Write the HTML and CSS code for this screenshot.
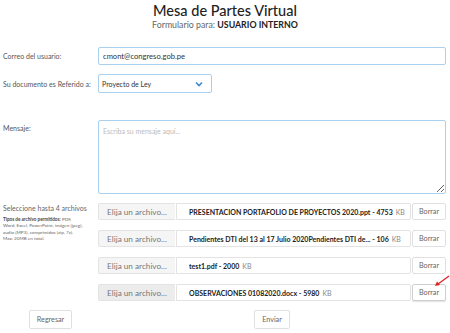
FILE: index.html
```html
<!DOCTYPE html>
<html lang="es">
 <head>
   <title>Mesa de Partes Virtual</title>
   <meta charset="utf-8">
   <link rel="stylesheet" href="styles.css">
 </head>
 <body>
  <div id="main">
    <div id="header">
      <h1>Mesa de Partes Virtual</h1>
      <p>Formulario para: <b>USUARIO INTERNO</b></p>
    </div>

    <form id="form">
      <label class="lbl mid">Correo del usuario:</label>
      <input class="field" type="text" value="cmont@congreso.gob.pe">

      <label class="lbl mid">Su documento es Referido a:</label>
      <div class="select-wrap">
        <select class="field select">
          <option>Proyecto de Ley</option>
        </select>
        <svg class="chevron" width="8" height="6" viewBox="0 0 8 6"><path d="M1 1.5 L4 4.5 L7 1.5" fill="none" stroke="#3b8ad6" stroke-width="1.6"/></svg>
      </div>

      <label class="lbl top msg-lbl">Mensaje:</label>
      <textarea class="field msg" placeholder="Escriba su mensaje aquí..."></textarea>

      <div class="files-info">
        <div class="files-title">Seleccione hasta 4 archivos</div>
        <div class="files-help"><b>Tipos de archivo permitidos:</b> PDF, Word, Excel, PowerPoint, imágen (jpeg), audio (MP3), comprimidos (zip, 7z). Max: 20MB en total.</div>
      </div>
      <div class="files">
        <div class="file-row">
          <span class="pick">Elija un archivo...</span>
          <span class="fname"><b>PRESENTACION PORTAFOLIO DE PROYECTOS 2020.ppt - 4753</b> KB</span>
          <button type="button" class="btn del">Borrar</button>
        </div>
        <div class="file-row">
          <span class="pick">Elija un archivo...</span>
          <span class="fname"><b>Pendientes DTI del 13 al 17 Julio 2020Pendientes DTI de... - 106</b> KB</span>
          <button type="button" class="btn del">Borrar</button>
        </div>
        <div class="file-row">
          <span class="pick">Elija un archivo...</span>
          <span class="fname"><b>test1.pdf - 2000</b> KB</span>
          <button type="button" class="btn del">Borrar</button>
        </div>
        <div class="file-row last">
          <span class="pick">Elija un archivo...</span>
          <span class="fname"><b>OBSERVACIONES 01082020.docx - 5980</b> KB</span>
          <button type="button" class="btn del">Borrar</button>
          <svg class="arrow" width="16" height="12" viewBox="0 0 16 12"><path d="M15 1 L4 9" stroke="#e02020" stroke-width="1.2"/><path d="M1 11 L3 6.5 L6 10 Z" fill="#e02020"/></svg>
        </div>
      </div>

      <div class="actions"><button type="button" class="btn">Regresar</button></div>
      <div class="actions"><button type="button" class="btn">Enviar</button></div>
    </form>
  </div>
 </body>
</html>
```
FILE: styles.css
```css
html, body {
  margin: 0;
  padding: 0;
  background: #fff;
}

#main {
  width: 450px;
  font-family: Lato, "Open Sans", sans-serif;
  color: #444;
}

#header {
  text-align: center;
  padding-top: 3px;
}

#header h1 {
  margin: 0;
  font-size: 14.5px;
  font-weight: 500;
  line-height: 16px;
  color: #222;
}

#header p {
  margin: 0;
  font-size: 8.8px;
  line-height: 11px;
  color: #666;
}

#header b {
  color: #222;
}

#form {
  display: grid;
  grid-template-columns: 95px minmax(0, 1fr);
  row-gap: 9px;
  padding: 17px 4px 0 3px;
}

.lbl {
  font-size: 7px;
  color: #555;
  white-space: nowrap;
}

.lbl.mid {
  align-self: center;
}

.lbl.top {
  padding-top: 4px;
}

.field {
  box-sizing: border-box;
  font-family: inherit;
  color: #333;
  border: 1px solid #a9d0ef;
  border-radius: 2px;
  background: #fff;
  outline: none;
}

input.field {
  height: 18px;
  padding: 0 4px;
  font-size: 7.6px;
}

.select-wrap {
  position: relative;
  width: 114px;
  height: 19px;
}

.select {
  display: block;
  width: 114px;
  height: 19px;
  padding: 0 3px;
  font-size: 7px;
  appearance: none;
  -webkit-appearance: none;
}

.chevron {
  position: absolute;
  right: 9px;
  top: 7px;
}

.msg-lbl {
  margin-top: 18px;
}

.msg {
  display: block;
  margin-top: 18px;
  height: 74px;
  padding: 6px 4px;
  font-size: 7px;
  resize: vertical;
}

.msg::placeholder {
  color: #bbb;
}

.files-info {
  margin-top: 1px;
}

.files-title {
  font-size: 7px;
  color: #666;
  line-height: 9px;
}

.files-help {
  width: 80px;
  font-size: 4.6px;
  line-height: 6.3px;
  color: #666;
  margin-top: 3px;
}

.files-help b {
  color: #444;
}

.files {
  display: flex;
  flex-direction: column;
  gap: 10px;
}

.file-row {
  position: relative;
  display: flex;
  height: 17px;
  gap: 1px;
}

.pick {
  box-sizing: border-box;
  width: 77px;
  border: 1px solid #e3e3e3;
  border-right: none;
  border-radius: 2px 0 0 2px;
  background: #f5f5f5;
  color: #777;
  font-size: 8.2px;
  display: flex;
  align-items: center;
  justify-content: center;
}

.last .pick {
  background: #ececec;
}

.fname {
  box-sizing: border-box;
  flex: 1;
  min-width: 0;
  border: 1px solid #e3e3e3;
  border-radius: 0 2px 2px 0;
  padding-left: 12px;
  font-size: 7px;
  color: #888;
  display: flex;
  align-items: center;
  white-space: nowrap;
  overflow: hidden;
}

.fname b {
  color: #222;
  margin-right: 3px;
}

.btn {
  box-sizing: border-box;
  font-family: inherit;
  font-size: 7.2px;
  color: #666;
  background: #fff;
  border: 1px solid #e0e0e0;
  border-radius: 2px;
  padding: 0 7px;
  height: 19px;
}

.del {
  flex: none;
  width: 34px;
  height: 17px;
  padding: 0;
}

.last .del {
  border-color: #cfcfcf;
  box-shadow: 0 1px 1px rgba(0, 0, 0, 0.12);
}

.arrow {
  position: absolute;
  right: -4px;
  top: -9px;
}

.actions {
  display: flex;
  justify-content: center;
}
```
